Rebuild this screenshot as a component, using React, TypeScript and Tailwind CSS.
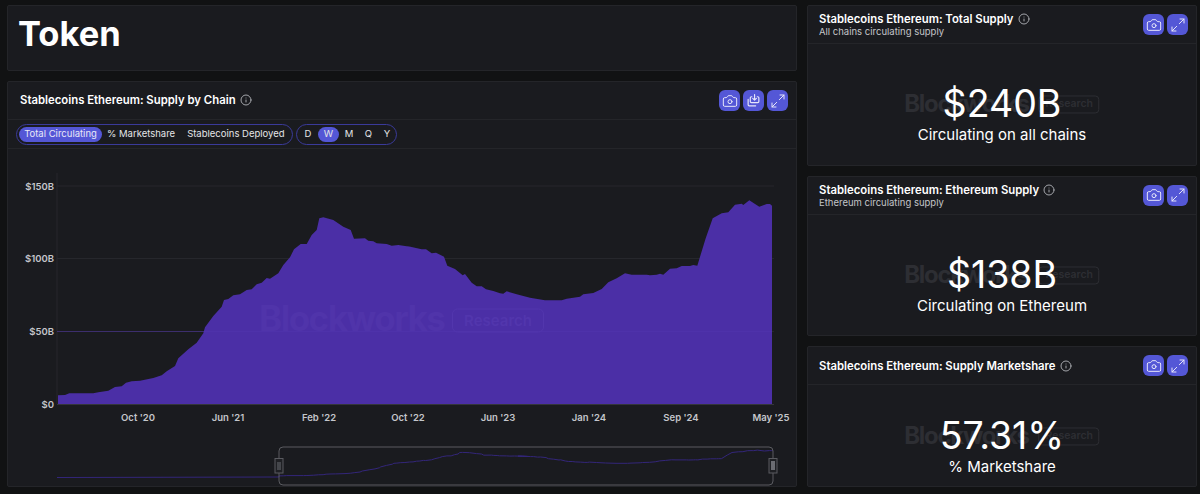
import { Camera, Info, Maximize2 } from 'lucide-react';

// --- CHART DATA ---
// points read off the picture in page pixels
const leftRaw = [
  [54, 676], [75, 675], [88, 670], [160, 670], [175, 667], [205, 662], [225, 651], [245, 649], [258, 638], [275, 634],
  [300, 632], [340, 624], [365, 616], [380, 604], [405, 588], [415, 565], [445, 538], [470, 518], [490, 490], [495, 472],
  [520, 438], [545, 410], [552, 390], [565, 387], [580, 376], [600, 373], [620, 360], [635, 358], [650, 343], [665, 338],
  [680, 324], [690, 326], [715, 310], [730, 285], [750, 262], [762, 238], [782, 222], [800, 222], [815, 195], [830, 180],
  [838, 145], [850, 142], [880, 150], [910, 170], [932, 180], [942, 206], [975, 205], [985, 212], [1000, 214], [1010, 220],
  [1040, 222], [1055, 227], [1075, 225], [1110, 230], [1140, 236],
];
const rightRaw = [
  [10, 226], [30, 230], [65, 238], [78, 238], [95, 250], [108, 248], [132, 260], [142, 287], [165, 297], [188, 316],
  [195, 312], [215, 338], [230, 349], [245, 349], [258, 358], [280, 363], [300, 370], [310, 371], [320, 364], [350, 373],
  [390, 383], [435, 391], [485, 391], [500, 386], [540, 380], [550, 373], [580, 369], [605, 357], [625, 337], [650, 325],
  [675, 310], [695, 314], [740, 314], [750, 316], [770, 314], [780, 311], [790, 314], [810, 296], [830, 295], [845, 288],
  [870, 288], [880, 285], [892, 287], [917, 205], [938, 145], [965, 130], [985, 127], [1005, 104], [1025, 101], [1030, 105],
  [1048, 91], [1078, 110], [1100, 102], [1110, 102], [1116, 107],
];
const supply = [
  ...leftRaw.map(([x, y]) => [40 + x / 3, 170 + y / 3]),
  ...rightRaw.map(([x, y]) => [400 + x / 3, 170 + y / 3]),
];
const toPath = (pts: number[][]) => pts.map(([x, y]) => `${x.toFixed(1)},${y.toFixed(1)}`).join(' ');
const areaPoints = toPath([[58, 404], ...supply, [772, 404]]);
// the navigator shows a longer range: flat until the brush, then the same curve squeezed into it
const miniPoints = toPath([
  [57, 477.5],
  [279, 477],
  ...supply.map(([x, y]) => [279 + (x - 58) * 0.692, 477 - (404 - y) * 0.132]),
]);

const yTicks = [
  { label: '$150B', y: 186 },
  { label: '$100B', y: 258.5 },
  { label: '$50B', y: 331.5 },
];
const xTicks = [
  { label: "Oct '20", x: 138 },
  { label: "Jun '21", x: 228 },
  { label: "Feb '22", x: 319 },
  { label: "Oct '22", x: 408 },
  { label: "Jun '23", x: 498 },
  { label: "Jan '24", x: 589 },
  { label: "Sep '24", x: 681 },
  { label: "May '25", x: 771 },
];

const stats = [
  { title: 'Stablecoins Ethereum: Total Supply', sub: 'All chains circulating supply', value: '$240B', caption: 'Circulating on all chains', height: 'h-[161px]' },
  { title: 'Stablecoins Ethereum: Ethereum Supply', sub: 'Ethereum circulating supply', value: '$138B', caption: 'Circulating on Ethereum', height: 'h-[161px]' },
  { title: 'Stablecoins Ethereum: Supply Marketshare', sub: '', value: '57.31%', caption: '% Marketshare', height: 'h-[141px]' },
];

// --- SMALL PIECES ---
const IconButton = ({ children }: { children: React.ReactNode }) => (
  <button className="flex h-[21px] w-[21px] items-center justify-center rounded-md bg-[#5457d6] text-[#e6e6fa]">
    {children}
  </button>
);

const SaveIcon = () => (
  <svg width="15" height="15" viewBox="0 0 14 14" fill="none" stroke="currentColor" strokeWidth="1.1" strokeLinecap="round" strokeLinejoin="round">
    <path d="M5.5 3.5H5a1 1 0 0 0-1 1v3.5a1 1 0 0 0 1 1h6a1 1 0 0 0 1-1V4.5a1 1 0 0 0-1-1h-.5" />
    <path d="M8 1.5V6.5 M6.3 5 8 6.7 9.7 5" />
    <path d="M2 6v5a1 1 0 0 0 1 1h6" />
  </svg>
);

const Watermark = () => (
  <div className="absolute left-1/2 top-1/2 flex -translate-x-1/2 -translate-y-[48%] items-center gap-[10px] text-[#2d2e33]">
    <span className="text-[24px] font-bold leading-none tracking-[-1.3px]">Blockworks</span>
    <span className="flex h-[18px] w-[61px] items-center justify-center rounded-[4px] border border-[#2d2e33] text-[10.5px] font-semibold">Research</span>
  </div>
);

const StatCard = ({ title, sub, value, caption, height }: (typeof stats)[number]) => (
  <div className={`flex flex-col rounded-[2px] border border-[#242529] bg-[#1a1b1f] ${height}`}>
    <div className="flex h-[38px] shrink-0 items-center justify-between border-b border-[#242529] pl-[11px] pr-2">
      <div>
        <div className="flex items-center gap-[4px] text-[11.35px] font-semibold leading-[14px] text-white">
          {title}
          <Info size={12} className="text-[#a4a6ab]" />
        </div>
        {sub && <div className="text-[9.5px] leading-[11px] text-[#c4c5c9]">{sub}</div>}
      </div>
      <div className="flex gap-[3px]">
        <IconButton>
          <Camera size={16} strokeWidth={1.5} />
        </IconButton>
        <IconButton>
          <Maximize2 size={16} strokeWidth={1.5} />
        </IconButton>
      </div>
    </div>
    <div className="relative flex flex-1 flex-col items-center justify-center pt-[21px]">
      <Watermark />
      <div className="relative text-[37.5px] leading-[40px] text-white">{value}</div>
      <div className="relative text-[15px] leading-[21px] text-white">{caption}</div>
    </div>
  </div>
);

// --- MAIN COMPONENT ---
export default function App() {
  return (
    <div className="flex h-[494px] w-[1200px] gap-[10px] overflow-hidden bg-[#111213] pb-[7px] pl-[7px] pt-[5px] font-[Inter,sans-serif]">
      <div className="flex w-[790px] flex-col gap-[10px]">
        <div className="h-[66px] rounded-[2px] border border-[#242529] bg-[#1a1b1f] pl-[10px] pt-[8px]">
          <h1 className="text-[34.5px] font-bold leading-[40px] text-white">Token</h1>
        </div>

        <div className="flex flex-1 flex-col rounded-[2px] border border-[#242529] bg-[#1a1b1f]">
          <div className="flex h-[38px] items-center justify-between border-b border-[#242529] pl-3 pr-2">
            <div className="flex items-center gap-[4px] text-[11.35px] font-semibold text-white">
              Stablecoins Ethereum: Supply by Chain
              <Info size={12} className="text-[#a4a6ab]" />
            </div>
            <div className="flex gap-[3px]">
              <IconButton>
                <Camera size={16} strokeWidth={1.5} />
              </IconButton>
              <IconButton>
                <SaveIcon />
              </IconButton>
              <IconButton>
                <Maximize2 size={16} strokeWidth={1.5} />
              </IconButton>
            </div>
          </div>

          <div className="flex h-[29px] items-center gap-[3px] whitespace-nowrap border-b border-[#242529] pl-2 text-[9.5px] text-[#e4e5e8]">
            <div className="flex h-[21px] w-[277px] items-center rounded-full border border-[#3a3a9a] px-[2px]">
              <span className="flex h-[15px] w-[83px] items-center justify-center rounded-full bg-[#5457d6] text-[#e8e8f8]">Total Circulating</span>
              <span className="ml-[5px]">% Marketshare</span>
              <span className="ml-[12px]">Stablecoins Deployed</span>
            </div>
            <div className="flex h-[21px] w-[101px] items-center rounded-full border border-[#3a3a9a] pl-[1px]">
              <span className="w-[20px] text-center">D</span>
              <span className="flex h-[15px] w-[21px] items-center justify-center rounded-full bg-[#5457d6]">W</span>
              <span className="w-[20px] text-center">M</span>
              <span className="w-[19px] text-center">Q</span>
              <span className="w-[18px] text-center">Y</span>
            </div>
          </div>

          <svg viewBox="8 149 788 337" className="block h-[337px] w-[788px]" fontFamily="Inter, sans-serif">
            {yTicks.map((t) => (
              <line key={t.label} x1="57" x2="774" y1={t.y} y2={t.y} stroke="#26272c" />
            ))}
            <line x1="57" x2="57" y1="173" y2="404" stroke="#26272c" />
            <polygon points={areaPoints} fill="#4b2fa6" />
            <line x1="57" x2="772" y1="331.5" y2="331.5" stroke="#5236ad" strokeOpacity="0.5" />
            <line x1="57" x2="774" y1="404.5" y2="404.5" stroke="#34353b" />

            <text x="259" y="331" fontSize="35" fontWeight="700" letterSpacing="-1.5" fill="#5034aa">Blockworks</text>
            <rect x="452.5" y="309" width="91" height="23" rx="5" fill="none" stroke="#5236ad" />
            <text x="498" y="326" fontSize="15" fontWeight="600" textAnchor="middle" fill="#5236ad">Research</text>

            {yTicks.map((t) => (
              <text key={t.label} x="54" y={t.y + 3.5} fontSize="9.5" fontWeight="600" textAnchor="end" fill="#c4c6cb">{t.label}</text>
            ))}
            <text x="54" y="408" fontSize="9.5" fontWeight="600" textAnchor="end" fill="#c4c6cb">$0</text>
            {xTicks.map((t) => (
              <text key={t.label} x={t.x} y="421" fontSize="9.5" fontWeight="600" textAnchor="middle" fill="#c4c6cb">{t.label}</text>
            ))}

            <polyline points={miniPoints} fill="none" stroke="#33267a" strokeWidth="1" />
            <rect x="279" y="447" width="494" height="38" rx="4" fill="none" stroke="#5a5b60" strokeWidth="1" />
            <rect x="275" y="458.5" width="8" height="14.5" fill="#1f2024" stroke="#5a5b60" />
            <line x1="278" x2="278" y1="462" y2="470" stroke="#6b6c72" />
            <line x1="280" x2="280" y1="462" y2="470" stroke="#6b6c72" />
            <rect x="769" y="458.5" width="8" height="14.5" fill="#1f2024" stroke="#5a5b60" />
            <rect x="771" y="461" width="4" height="9" fill="#6b6c72" />
          </svg>
        </div>
      </div>

      <div className="flex w-[390px] flex-col gap-[10px]">
        {stats.map((s) => (
          <StatCard key={s.title} {...s} />
        ))}
      </div>
    </div>
  );
}
